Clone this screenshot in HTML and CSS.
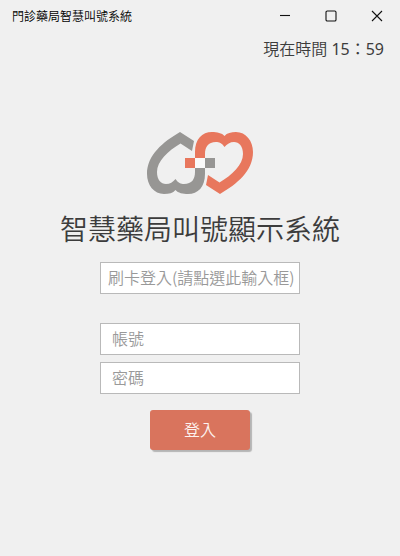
FILE: index.html
```html
<!DOCTYPE html>
<html lang="zh-Hant">
<head>
<meta charset="utf-8">
<meta name="viewport" content="width=device-width, initial-scale=1">
<title>門診藥局智慧叫號系統</title>
<link rel="stylesheet" href="styles.css">
</head>
<body>
<header class="titlebar">
  <span class="titlebar-name">門診藥局智慧叫號系統</span>
  <div class="window-controls">
    <button type="button" class="window-button" aria-label="最小化"><svg width="12" height="12" viewBox="0 0 12 12"><path d="M1 5.5h10"/></svg></button>
    <button type="button" class="window-button" aria-label="最大化"><svg width="12" height="12" viewBox="0 0 12 12"><rect x="1" y="1" width="10" height="10" rx="1.3"/></svg></button>
    <button type="button" class="window-button" aria-label="關閉"><svg width="12" height="12" viewBox="0 0 12 12"><path d="M1 1l10 10M11 1L1 11"/></svg></button>
  </div>
</header>
<p class="clock">現在時間 <time class="clock-time">15：59</time></p>
<main class="login">
  <svg class="logo" width="106" height="62" viewBox="0 0 106 62" aria-hidden="true">
    <defs>
      <path id="heart" d="M48 26V20C48 7 55 0 65 0C70 0 75 1 77.5 4C80 1 84 0 89 0C99 0 106 9 106 20C106 39 90 52 73 62L59 53L61 43L72.5 50.5C85 43 96 33 96 22C96 14 92 10 87 10C83 10 80 12 77.5 15C75 11 72 10 69 10C61 10 58 15 58 22V26Z"/>
    </defs>
    <rect class="logo-center" x="48" y="26" width="10" height="10"/>
    <use class="logo-red" href="#heart"/>
    <use class="logo-gray" href="#heart" transform="rotate(180 53 31)"/>
    <rect class="logo-red" x="38" y="26" width="10" height="10"/>
    <rect class="logo-gray" x="58" y="26" width="10" height="10"/>
  </svg>
  <h1 class="heading">智慧藥局叫號顯示系統</h1>
  <form class="form">
    <input class="field field-card" type="text" aria-label="刷卡登入" placeholder="刷卡登入(請點選此輸入框)">
    <input class="field" type="text" aria-label="帳號" placeholder="帳號">
    <input class="field" type="password" aria-label="密碼" placeholder="密碼">
    <button class="submit" type="submit">登入</button>
  </form>
</main>
</body>
</html>
```
FILE: styles.css
```css
* {
  box-sizing: border-box;
}

body {
  margin: 0;
  min-height: 100vh;
  background: #f0f0f0;
  color: #3c3c3c;
  font-family: "Noto Sans CJK TC", sans-serif;
  font-weight: 350;
}

.titlebar {
  display: flex;
  justify-content: space-between;
  height: 32px;
  padding-left: 12px;
  color: #000;
  font-size: 12px;
  line-height: 32px;
}

.window-controls {
  display: flex;
}

.window-button {
  display: flex;
  align-items: center;
  justify-content: center;
  width: 46px;
  padding: 0;
  border: 0;
  background: none;
}

.window-button svg {
  fill: none;
  stroke: #111;
  stroke-width: 1.1;
}

.clock {
  margin: 5px 16px 0;
  font-family: "Noto Sans", "Noto Sans CJK TC", sans-serif;
  font-size: 16px;
  line-height: 24px;
  text-align: right;
}

.clock-time {
  font-weight: 400;
}

.login {
  display: flex;
  flex-direction: column;
  align-items: center;
  padding-top: 71px;
}

.logo-red {
  fill: #e8775d;
}

.logo-gray {
  fill: #979694;
}

.logo-center {
  fill: #fafafa;
}

.heading {
  margin: 14px 0;
  font-size: 28px;
  font-weight: 350;
  line-height: 40px;
}

.form {
  display: flex;
  flex-direction: column;
  align-items: center;
  gap: 7px;
}

.field {
  width: 200px;
  height: 32px;
  padding: 0 11px 2px;
  border: 1px solid #b9b9b9;
  background: #fff;
  color: #3c3c3c;
  font: 350 16px "Noto Sans CJK TC", sans-serif;
}

.field::placeholder {
  color: #999;
}

.field-card {
  margin-bottom: 22px;
  padding: 0 4px 2px 7px;
}

.submit {
  width: 100px;
  height: 40px;
  margin-top: 9px;
  padding: 0 0 2px;
  border: 0;
  border-radius: 3px;
  background: #d9745d;
  box-shadow: 2px 2px 1px #b4b4b4;
  color: #fdf3f0;
  font: 350 16px "Noto Sans CJK TC", sans-serif;
}
```
